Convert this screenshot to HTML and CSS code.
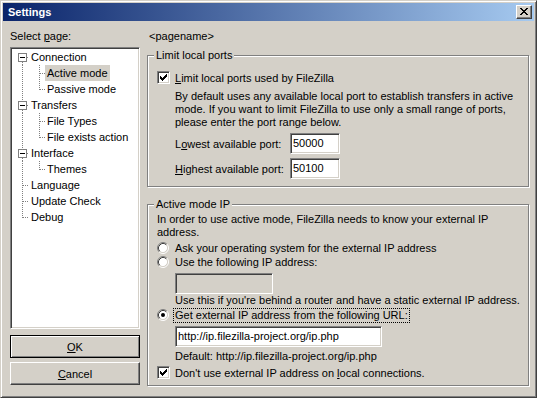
FILE: index.html
```html
<!DOCTYPE html>
<html>
<head>
<meta charset="utf-8">
<title>Settings</title>
<link rel="stylesheet" href="styles.css">
</head>
<body>
<div class="window">
  <div class="titlebar">
    <span class="title">Settings</span>
    <span class="close"><svg width="8" height="7" viewBox="0 0 8 7"><path d="M0 0h2v1H0zM6 0h2v1H6zM1 1h2v1H1zM5 1h2v1H5zM2 2h4v1H2zM3 3h2v1H3zM2 4h4v1H2zM1 5h2v1H1zM5 5h2v1H5zM0 6h2v1H0zM6 6h2v1H6z" fill="#000"/></svg></span>
  </div>
  <div class="main">
    <div class="left">
      <div class="lbl">Select <u>p</u>age:</div>
      <div class="tree">
        <div class="row"><svg width="17" height="16" viewBox="0 0 17 16"><path class="dot" d="M10.5 13V16M15 8.5H17"/><rect x="6.5" y="4.5" width="8" height="8" fill="#fff" stroke="#808080"/><path d="M8 8.5h5" stroke="#000"/></svg><span class="t">Connection</span></div>
        <div class="row"><svg width="33" height="16" viewBox="0 0 33 16"><path class="dot" d="M10.5 0V16M27.5 0V16M28 8.5H33"/></svg><span class="t sel">Active mode</span></div>
        <div class="row"><svg width="33" height="16" viewBox="0 0 33 16"><path class="dot" d="M10.5 0V16M27.5 0V9M28 8.5H33"/></svg><span class="t">Passive mode</span></div>
        <div class="row"><svg width="17" height="16" viewBox="0 0 17 16"><path class="dot" d="M10.5 0V4M10.5 13V16M15 8.5H17"/><rect x="6.5" y="4.5" width="8" height="8" fill="#fff" stroke="#808080"/><path d="M8 8.5h5" stroke="#000"/></svg><span class="t">Transfers</span></div>
        <div class="row"><svg width="33" height="16" viewBox="0 0 33 16"><path class="dot" d="M10.5 0V16M27.5 0V16M28 8.5H33"/></svg><span class="t">File Types</span></div>
        <div class="row"><svg width="33" height="16" viewBox="0 0 33 16"><path class="dot" d="M10.5 0V16M27.5 0V9M28 8.5H33"/></svg><span class="t">File exists action</span></div>
        <div class="row"><svg width="17" height="16" viewBox="0 0 17 16"><path class="dot" d="M10.5 0V4M10.5 13V16M15 8.5H17"/><rect x="6.5" y="4.5" width="8" height="8" fill="#fff" stroke="#808080"/><path d="M8 8.5h5" stroke="#000"/></svg><span class="t">Interface</span></div>
        <div class="row"><svg width="33" height="16" viewBox="0 0 33 16"><path class="dot" d="M10.5 0V16M27.5 0V9M28 8.5H33"/></svg><span class="t">Themes</span></div>
        <div class="row"><svg width="17" height="16" viewBox="0 0 17 16"><path class="dot" d="M10.5 0V16M11 8.5H17"/></svg><span class="t">Language</span></div>
        <div class="row"><svg width="17" height="16" viewBox="0 0 17 16"><path class="dot" d="M10.5 0V16M11 8.5H17"/></svg><span class="t">Update Check</span></div>
        <div class="row"><svg width="17" height="16" viewBox="0 0 17 16"><path class="dot" d="M10.5 0V9M11 8.5H17"/></svg><span class="t">Debug</span></div>
      </div>
      <div class="btn def"><span><u>O</u>K</span></div>
      <div class="btn cancel"><span><u>C</u>ancel</span></div>
    </div>
    <div class="right">
      <div class="lbl pagename">&lt;pagename&gt;</div>
      <div class="group g1">
        <span class="legend">Limit local ports</span>
        <div class="chk-row">
          <span class="check"><svg width="7" height="7" viewBox="0 0 7 7"><path d="M0 2h1v3H0zM1 3h1v3H1zM2 4h1v3H2zM3 3h1v3H3zM4 2h1v3H4zM5 1h1v3H5zM6 0h1v3H6z" fill="#000"/></svg></span>
          <span><u>L</u>imit local ports used by FileZilla</span>
        </div>
        <div class="para">By default uses any available local port to establish transfers in active mode. If you want to limit FileZilla to use only a small range of ports, please enter the port range below.</div>
        <div class="port-row"><span class="pl">L<u>o</u>west available port:</span><span class="edit port">50000</span></div>
        <div class="port-row"><span class="pl"><u>H</u>ighest available port:</span><span class="edit port">50100</span></div>
      </div>
      <div class="group g2">
        <span class="legend">Active mode IP</span>
        <div class="intro">In order to use active mode, FileZilla needs to know your external IP address.</div>
        <div class="radio-row first">
          <svg class="radio" width="12" height="12" viewBox="0 0 12 12"><circle cx="6" cy="6" r="4.5" fill="#fff"/><path d="M2.11 9.89A5.5 5.5 0 0 1 9.89 2.11" stroke="#808080" fill="none"/><path d="M9.89 2.11A5.5 5.5 0 0 1 2.11 9.89" stroke="#fff" fill="none"/><path d="M2.82 9.18A4.5 4.5 0 0 1 9.18 2.82" stroke="#404040" fill="none"/><path d="M9.18 2.82A4.5 4.5 0 0 1 2.82 9.18" stroke="#d4d0c8" fill="none"/></svg>
          <span>Ask your operating system for the external IP address</span>
        </div>
        <div class="radio-row">
          <svg class="radio" width="12" height="12" viewBox="0 0 12 12"><circle cx="6" cy="6" r="4.5" fill="#fff"/><path d="M2.11 9.89A5.5 5.5 0 0 1 9.89 2.11" stroke="#808080" fill="none"/><path d="M9.89 2.11A5.5 5.5 0 0 1 2.11 9.89" stroke="#fff" fill="none"/><path d="M2.82 9.18A4.5 4.5 0 0 1 9.18 2.82" stroke="#404040" fill="none"/><path d="M9.18 2.82A4.5 4.5 0 0 1 2.82 9.18" stroke="#d4d0c8" fill="none"/></svg>
          <span>Use the following IP address:</span>
        </div>
        <div class="edit ip disabled"></div>
        <div class="note">Use this if you're behind a router and have a static external IP address.</div>
        <div class="radio-row third">
          <svg class="radio" width="12" height="12" viewBox="0 0 12 12"><circle cx="6" cy="6" r="4.5" fill="#fff"/><path d="M2.11 9.89A5.5 5.5 0 0 1 9.89 2.11" stroke="#808080" fill="none"/><path d="M9.89 2.11A5.5 5.5 0 0 1 2.11 9.89" stroke="#fff" fill="none"/><path d="M2.82 9.18A4.5 4.5 0 0 1 9.18 2.82" stroke="#404040" fill="none"/><path d="M9.18 2.82A4.5 4.5 0 0 1 2.82 9.18" stroke="#d4d0c8" fill="none"/><circle cx="6" cy="6" r="2" fill="#000"/></svg>
          <span class="focus">Get external IP address from the following URL:</span>
        </div>
        <div class="edit url">http://ip.filezilla-project.org/ip.php</div>
        <div class="note def">Default: http://ip.filezilla-project.org/ip.php</div>
        <div class="chk-row last">
          <span class="check"><svg width="7" height="7" viewBox="0 0 7 7"><path d="M0 2h1v3H0zM1 3h1v3H1zM2 4h1v3H2zM3 3h1v3H3zM4 2h1v3H4zM5 1h1v3H5zM6 0h1v3H6z" fill="#000"/></svg></span>
          <span>Don't use external IP address on <u>l</u>ocal connections.</span>
        </div>
      </div>
    </div>
  </div>
</div>
</body>
</html>
```
FILE: styles.css
```css
* { box-sizing: border-box; }
html, body { margin: 0; padding: 0; }
body {
  font-family: "Liberation Sans", Arial, sans-serif;
  font-size: 11px;
  color: #000;
  background: #fff;
}
svg { display: block; shape-rendering: crispEdges; }
.radio { shape-rendering: auto; }

.window {
  width: 537px;
  height: 398px;
  background: #d4d0c8;
  border: 1px solid;
  border-color: #d4d0c8 #404040 #404040 #d4d0c8;
  box-shadow: inset 1px 1px 0 #fff, inset -1px -1px 0 #808080;
  padding: 2px;
  display: flex;
  flex-direction: column;
}

.titlebar {
  height: 18px;
  flex: none;
  background: linear-gradient(to right, #0a246a, #a6caf0);
  display: flex;
  align-items: center;
  justify-content: space-between;
  padding: 0 2px 0 5px;
}
.title { color: #fff; font-weight: bold; line-height: 18px; }
.close {
  width: 16px;
  height: 14px;
  background: #d4d0c8;
  border: 1px solid;
  border-color: #fff #404040 #404040 #fff;
  box-shadow: inset -1px -1px 0 #808080;
  display: flex;
  padding: 2px 0 0 3px;
}

.main {
  flex: 1;
  display: flex;
  gap: 7px;
  padding: 9px 8px 9px 7px;
}
.lbl { height: 13px; line-height: 13px; white-space: nowrap; }

.left { width: 130px; flex: none; display: flex; flex-direction: column; padding-bottom: 1px; }
.tree {
  flex: 1;
  margin-top: 4px;
  background: #fff;
  border: 1px solid;
  border-color: #808080 #fff #fff #808080;
  box-shadow: inset 1px 1px 0 #404040, inset -1px -1px 0 #d4d0c8;
  padding: 1px;
  overflow: hidden;
}
.row { display: flex; height: 16px; }
.row svg { flex: none; }
.dot { stroke: #808080; stroke-dasharray: 1 1; fill: none; }
.t { padding: 0 2px; line-height: 16px; white-space: nowrap; }
.t.sel { background: #d4d0c8; }

.btn {
  height: 23px;
  flex: none;
  display: flex;
  align-items: center;
  justify-content: center;
  border: 1px solid;
  border-color: #fff #404040 #404040 #fff;
  box-shadow: inset -1px -1px 0 #808080;
}
.btn.def {
  margin-top: 6px;
  border-color: #000;
  box-shadow: inset 1px 1px 0 #fff, inset -1px -1px 0 #808080;
}
.btn.cancel { margin-top: 4px; }

.right { flex: 1; display: flex; flex-direction: column; }
.pagename { padding-left: 2px; }

.group {
  position: relative;
  flex: none;
  border: 1px solid #808080;
  box-shadow: 1px 1px 0 #fff, inset 1px 1px 0 #fff;
}
.g1 { margin-top: 12px; height: 132px; padding: 15px 8px 0 9px; }
.g2 { margin-top: 17px; height: 182px; padding: 8px 8px 0 9px; }
.legend {
  position: absolute;
  top: -7px;
  left: 6px;
  padding: 0 2px;
  background: #d4d0c8;
  line-height: 13px;
  white-space: nowrap;
}

.chk-row { display: flex; align-items: center; height: 13px; gap: 5px; white-space: nowrap; }
.check {
  width: 13px;
  height: 13px;
  flex: none;
  background: #fff;
  border: 1px solid;
  border-color: #808080 #fff #fff #808080;
  box-shadow: inset 1px 1px 0 #404040, inset -1px -1px 0 #d4d0c8;
  padding: 2px 0 0 2px;
}
.para { margin: 6px 0 0 18px; line-height: 13px; }
.port-row { display: flex; align-items: center; height: 21px; margin: 4px 0 0 18px; white-space: nowrap; }
.pl { width: 115px; flex: none; }

.edit {
  height: 21px;
  background: #fff;
  border: 1px solid;
  border-color: #808080 #fff #fff #808080;
  box-shadow: inset 1px 1px 0 #404040, inset -1px -1px 0 #d4d0c8;
  padding: 0 2px;
  line-height: 19px;
  white-space: nowrap;
}
.edit.port { width: 50px; }
.edit.ip { width: 98px; margin: 4px 0 0 18px; }
.edit.disabled { background: #d4d0c8; }
.edit.url { width: 207px; margin: 4px 0 0 18px; }

.intro { line-height: 13px; }
.radio-row { display: flex; align-items: center; height: 14px; gap: 6px; white-space: nowrap; }
.radio-row.first { margin-top: 2px; }
.radio { flex: none; }
.radio-row.third { margin-top: 1px; gap: 5px; }
.focus { outline: 1px dotted #000; padding: 0 1px; line-height: 13px; }
.note { margin-left: 18px; line-height: 13px; white-space: nowrap; }
.note.def { margin-top: 3px; }
.chk-row.last { margin-top: 3px; }
```
